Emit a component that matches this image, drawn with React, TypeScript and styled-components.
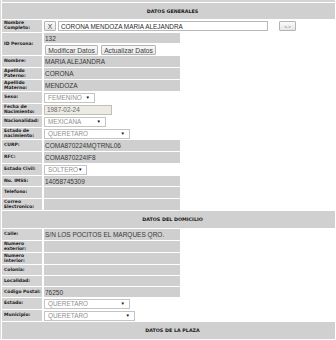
import styled, { createGlobalStyle } from 'styled-components';

const GlobalStyle = createGlobalStyle`
  body {
    margin: 0;
    background: #ffffff;
    font-family: "Liberation Sans", Arial, sans-serif;
  }
`;

const Form = styled.div`
  width: 335px;
  display: grid;
  grid-template-columns: 40px 1fr;
  gap: 1px;
  padding-left: 1px;
  border-left: 1px solid #dcdcdc;
  background: #ffffff;
  box-sizing: border-box;
`;

const TopStrip = styled.div`
  grid-column: 1 / -1;
  height: 2px;
  background: #d4d4d4;
`;

const Header = styled.div<{ $h?: number }>`
  grid-column: 1 / -1;
  height: ${(p) => p.$h ?? 16}px;
  background: #d0d0d0;
  display: flex;
  align-items: center;
  justify-content: center;
  padding-left: 8px;
  font-family: "DejaVu Sans", Verdana, sans-serif;
  font-weight: bold;
  font-size: 4.8px;
  color: #1a1a1a;
`;

const Label = styled.div<{ $h?: number }>`
  height: ${(p) => p.$h ?? 11}px;
  background: #d3d3d3;
  display: flex;
  align-items: center;
  padding-left: 2px;
  font-family: "DejaVu Sans", Verdana, sans-serif;
  font-weight: bold;
  font-size: 4.5px;
  line-height: 4.8px;
  color: #1a1a1a;
  white-space: nowrap;
  overflow: hidden;
`;

const Value = styled.div<{ $col?: boolean }>`
  display: flex;
  flex-direction: ${(p) => (p.$col ? 'column' : 'row')};
  align-items: ${(p) => (p.$col ? 'flex-start' : 'center')};
  gap: 2px;
  padding-left: 1px;
`;

const GrayBox = styled.div<{ $h?: number }>`
  width: 136px;
  height: ${(p) => p.$h ?? 11}px;
  background: #cfcfcf;
  display: flex;
  align-items: center;
  padding-left: 1px;
  box-sizing: border-box;
  font-size: 6.5px;
  color: #383838;
  white-space: nowrap;
`;

const TextInput = styled.div<{ $w: number }>`
  width: ${(p) => p.$w}px;
  height: 10px;
  background: #ffffff;
  border: 1px solid #b8b8b8;
  box-sizing: border-box;
  display: flex;
  align-items: center;
  padding-left: 2px;
  font-size: 6.4px;
  color: #2a2a2a;
  white-space: nowrap;
`;

const DateInput = styled(TextInput)`
  background: #ebebe4;
  border-color: #c0c0b8;
  color: #6a6a6a;
`;

const Button = styled.div<{ $w: number; $ml?: number }>`
  width: ${(p) => p.$w}px;
  height: 10px;
  margin-left: ${(p) => p.$ml ?? 0}px;
  background: linear-gradient(#fafafa, #e6e6e6);
  border: 1px solid #b4b4b4;
  border-radius: 1px;
  box-sizing: border-box;
  display: flex;
  align-items: center;
  justify-content: center;
  font-size: 6.7px;
  color: #3c3c3c;
  white-space: nowrap;
`;

const SmallButton = styled(Button)`
  font-size: 4px;
  color: #555;
`;

const ButtonRow = styled.div`
  display: flex;
  gap: 3px;
  padding-left: 1px;
`;

const Select = styled.div<{ $w: number }>`
  width: ${(p) => p.$w}px;
  height: 10px;
  background: #ffffff;
  border: 1px solid #c4c4c4;
  box-sizing: border-box;
  display: flex;
  align-items: center;
  justify-content: space-between;
  padding: 0 4px 0 3px;
  font-size: 6.4px;
  color: #909090;
  white-space: nowrap;
`;

const Arrow = styled.span`
  font-size: 4.5px;
  color: #111;
`;

type RowProps = { label: React.ReactNode; children?: React.ReactNode; h?: number };

function Row({ label, children, h }: RowProps) {
  return (
    <>
      <Label $h={h}>{label}</Label>
      <Value>{children}</Value>
    </>
  );
}

function GrayRow({ label, value, h }: { label: React.ReactNode; value?: string; h?: number }) {
  return (
    <Row label={label} h={h}>
      <GrayBox $h={h}>{value}</GrayBox>
    </Row>
  );
}

function Drop({ w, text }: { w: number; text: string }) {
  return (
    <Select $w={w}>
      <span>{text}</span>
      <Arrow>▼</Arrow>
    </Select>
  );
}

export default function App() {
  return (
    <>
      <GlobalStyle />
      <Form>
        <TopStrip />
        <Header>DATOS GENERALES</Header>

        <Row label={<span>Nombre<br />Completo:</span>} h={12}>
          <Button $w={12}>X</Button>
          <TextInput $w={210}>CORONA MENDOZA MARIA ALEJANDRA</TextInput>
          <SmallButton $w={17} $ml={9}>&lt;-&gt;</SmallButton>
        </Row>

        <Label $h={22}>ID Persona:</Label>
        <Value $col>
          <GrayBox $h={10}>132</GrayBox>
          <ButtonRow>
            <Button $w={53}>Modificar Datos</Button>
            <Button $w={55}>Actualizar Datos</Button>
          </ButtonRow>
        </Value>

        <GrayRow label="Nombre:" value="MARIA ALEJANDRA" />
        <GrayRow label={<span>Apellido<br />Paterno:</span>} value="CORONA" />
        <GrayRow label={<span>Apellido<br />Materno:</span>} value="MENDOZA" />
        <Row label="Sexo:">
          <Drop w={51} text="FEMENINO" />
        </Row>
        <Row label={<span>Fecha de<br />Nacimiento:</span>}>
          <DateInput $w={68}>1987-02-24</DateInput>
        </Row>
        <Row label="Nacionalidad:">
          <Drop w={62} text="MEXICANA" />
        </Row>
        <Row label={<span>Estado de<br />nacimiento:</span>}>
          <Drop w={86} text="QUERETARO" />
        </Row>
        <GrayRow label="CURP:" value="COMA870224MQTRNL06" />
        <GrayRow label="RFC:" value="COMA870224IF8" />
        <Row label="Estado Civil:">
          <Drop w={43} text="SOLTERO" />
        </Row>
        <GrayRow label="No. IMSS:" value="14058745309" h={10} />
        <GrayRow label="Telefono:" />
        <GrayRow label={<span>Correo<br />Electronico:</span>} />

        <Header $h={17}>DATOS DEL DOMICILIO</Header>

        <GrayRow label="Calle:" value="S/N LOS POCITOS EL MARQUES QRO." />
        <GrayRow label={<span>Numero<br />exterior:</span>} />
        <GrayRow label={<span>Numero<br />interior:</span>} />
        <GrayRow label="Colonia:" h={10} />
        <GrayRow label="Localidad:" h={10} />
        <Row label="Código Postal:" h={10}>
          <GrayBox $h={10}>76250</GrayBox>
        </Row>
        <Row label="Estado:">
          <Drop w={86} text="QUERETARO" />
        </Row>
        <Row label="Municipio:">
          <Drop w={91} text="QUERETARO" />
        </Row>

        <Header $h={17}>DATOS DE LA PLAZA</Header>
      </Form>
    </>
  );
}
